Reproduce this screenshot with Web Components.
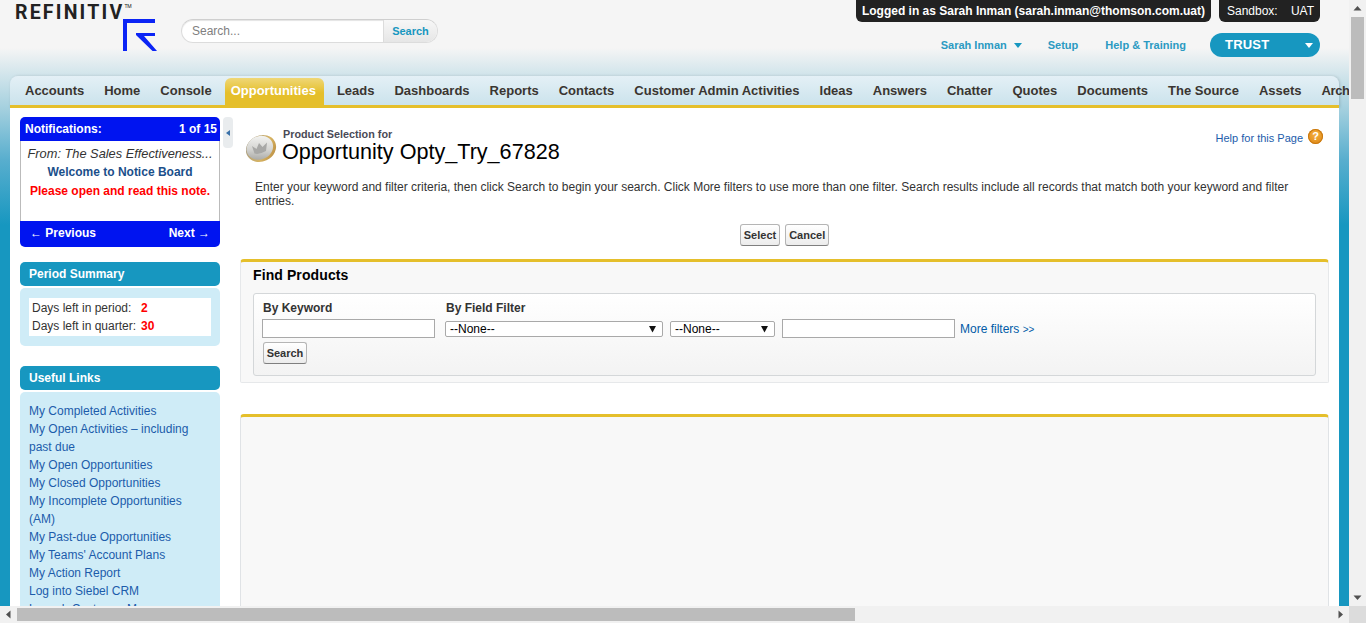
<!DOCTYPE html>
<html lang="en">
<head>
<meta charset="utf-8">
<title>Product Selection</title>
<style>
  html, body { margin: 0; height: 100%; overflow: hidden; }
  body { font: 12px "Liberation Sans", Arial, sans-serif; color: #222; }
</style>
</head>
<body>
<browser-frame>
  <app-header></app-header>
  <nav-tabs>
    <nav-tab>Accounts</nav-tab><nav-tab>Home</nav-tab><nav-tab>Console</nav-tab><nav-tab active>Opportunities</nav-tab><nav-tab>Leads</nav-tab><nav-tab>Dashboards</nav-tab><nav-tab>Reports</nav-tab><nav-tab>Contacts</nav-tab><nav-tab>Customer Admin Activities</nav-tab><nav-tab>Ideas</nav-tab><nav-tab>Answers</nav-tab><nav-tab>Chatter</nav-tab><nav-tab>Quotes</nav-tab><nav-tab>Documents</nav-tab><nav-tab>The Source</nav-tab><nav-tab>Assets</nav-tab><nav-tab style="letter-spacing:-.4px">Arch</nav-tab>
  </nav-tabs>
  <page-body>
    <side-bar slot="side">
      <notice-board></notice-board>
      <side-panel heading="Period Summary"><period-summary></period-summary></side-panel>
      <side-panel heading="Useful Links" style="margin-top:5px">
        <link-list>
          <a>My Completed Activities</a>
          <a>My Open Activities – including past due</a>
          <a>My Open Opportunities</a>
          <a>My Closed Opportunities</a>
          <a>My Incomplete Opportunities (AM)</a>
          <a>My Past-due Opportunities</a>
          <a>My Teams' Account Plans</a>
          <a>My Action Report</a>
          <a>Log into Siebel CRM</a>
          <a>Launch Customer Map</a>
        </link-list>
      </side-panel>
    </side-bar>
    <page-heading></page-heading>
    <find-products></find-products>
    <results-panel></results-panel>
  </page-body>
</browser-frame>

<script>
class BrowserFrame extends HTMLElement {
  constructor() { super(); this.attachShadow({ mode: 'open' }); }
  connectedCallback() {
    const arrow = (pts) => `<svg width="9" height="9" viewBox="0 0 9 9"><polygon points="${pts}" fill="#505050"/></svg>`;
    this.shadowRoot.innerHTML = `
      <style>
        :host { display: grid; grid-template-columns: 1349px 17px; grid-template-rows: 606px 17px; width: 1366px; height: 623px; }
        .view { overflow: hidden; background: linear-gradient(180deg, #f5f5f5 0, #f5f5f5 48px, #a2cfde 110px, #58aece 160px, #1797c0 225px); }
        .vbar { background: #f1f1f1; display: flex; flex-direction: column; align-items: center; }
        .vbar .btn { height: 17px; display: flex; align-items: center; justify-content: center; flex: none; }
        .vbar .thumb { width: 13px; height: 82px; background: #bcbcbc; flex: none; }
        .vbar .rest { flex: 1; }
        .hbar { background: #f1f1f1; display: flex; align-items: center; }
        .hbar .btn { width: 17px; flex: none; display: flex; justify-content: center; }
        .hbar .thumb { width: 838px; height: 13px; background: #bcbcbc; flex: none; }
        .hbar .rest { flex: 1; }
        .corner { background: #dcdcdc; }
      </style>
      <div class="view"><slot></slot></div>
      <div class="vbar">
        <div class="btn">${arrow('4.5,2 8.5,6.5 0.5,6.5')}</div>
        <div class="thumb"></div><div class="rest"></div>
        <div class="btn">${arrow('0.5,2.5 8.5,2.5 4.5,7')}</div>
      </div>
      <div class="hbar">
        <div class="btn">${arrow('2,4.5 6.5,0.5 6.5,8.5')}</div>
        <div class="thumb"></div><div class="rest"></div>
        <div class="btn">${arrow('2.5,0.5 7,4.5 2.5,8.5')}</div>
      </div>
      <div class="corner"></div>
    `;
  }
}

class AppHeader extends HTMLElement {
  constructor() { super(); this.attachShadow({ mode: 'open' }); }
  connectedCallback() {
    this.shadowRoot.innerHTML = `
      <style>
        :host { display: flex; justify-content: space-between; height: 76px; padding: 0 29px 0 15px; font: 12px "Liberation Sans", Arial, sans-serif; }
        .left { display: flex; align-items: flex-start; }
        .logo { width: 142px; padding-top: 3px; }
        .word { font: 700 19.5px/19px Roboto, "Liberation Sans", sans-serif; letter-spacing: 2.2px; color: #222; white-space: nowrap; height: 16px; }
        .word sup { font-size: 5px; letter-spacing: 0; vertical-align: 11px; line-height: 0; font-weight: 400; }
        .logo svg { display: block; margin-left: 108px; }
        .search { display: flex; width: 257px; height: 24px; margin: 19px 0 0 24px; border: 1px solid #dcdcdc; border-top-color: #cfcfcf; border-radius: 12px; box-sizing: border-box; overflow: hidden; background: #fff; box-shadow: inset 0 1px 1px #e4e4e4; }
        .search .q { flex: 1; padding-left: 10px; line-height: 22px; color: #808080; }
        .search .go { width: 53px; text-align: center; line-height: 22px; font-weight: 700; font-size: 11px; color: #1797c0; background: linear-gradient(#f7f7f7, #e6e6e6); border-left: 1px solid #dcdcdc; }
        .right { display: flex; flex-direction: column; align-items: flex-end; }
        .badges { display: flex; gap: 8px; }
        .badge { background: #222; color: #fff; height: 22px; line-height: 22px; border-radius: 0 0 6px 6px; padding: 0 6px; white-space: nowrap; }
        .badge b { font-size: 12px; }
        .sandbox { width: 87px; padding-left: 8px; display: flex; justify-content: space-between; }
        .links { display: flex; align-items: center; margin-top: 11px; height: 24px; font-weight: 700; font-size: 11px; color: #2b9ac2; }
        .links span { white-space: nowrap; }
        .caret { display: inline-block; border: 4px solid transparent; border-top: 5px solid #1797c0; border-bottom: 0; margin: 0 0 1px 7px; }
        .setup { margin-left: 26px; }
        .help { margin-left: 27px; margin-right: 24px; }
        .trust { width: 110px; height: 24px; border-radius: 12px; background: #1797c0; color: #fff; font: 700 13px/22px "Liberation Sans", sans-serif; letter-spacing: .2px; padding: 0 7px 1px 15px; box-sizing: border-box; display: flex; justify-content: space-between; align-items: center; }
        .trust i { border: 4px solid transparent; border-top: 5px solid #fff; border-bottom: 0; margin-top: 1px; }
      </style>
      <div class="left">
        <div class="logo">
          <div class="word">REFINITIV<sup>TM</sup></div>
          <svg width="35" height="33" viewBox="0 0 35 33"><path fill="#0b24f5" d="M0 0H32V4H4V32H0ZM13 14H32V17H21L34 32H29.5L13 16Z"/></svg>
        </div>
        <div class="search"><div class="q">Search...</div><div class="go">Search</div></div>
      </div>
      <div class="right">
        <div class="badges">
          <div class="badge"><b>Logged in as Sarah Inman (sarah.inman@thomson.com.uat)</b></div>
          <div class="badge sandbox"><span>Sandbox:</span><span>UAT</span></div>
        </div>
        <div class="links">
          <span>Sarah Inman<i class="caret"></i></span>
          <span class="setup">Setup</span>
          <span class="help">Help &amp; Training</span>
          <div class="trust"><span>TRUST</span><i></i></div>
        </div>
      </div>
    `;
  }
}

class NavTabs extends HTMLElement {
  constructor() {
    super();
    this.attachShadow({ mode: 'open' }).innerHTML = `
      <style>
        :host { display: flex; height: 29px; margin: 0 10px; padding-left: 5px; padding-top: 0; border-bottom: 3px solid #e5bf2b; border-radius: 8px 8px 0 0; background: linear-gradient(#e4f0f6, #cbe3ec); white-space: nowrap; box-shadow: 1px 0 3px rgba(0,0,0,.15); }
      </style>
      <slot></slot>
    `;
  }
}

class NavTab extends HTMLElement {
  constructor() {
    super();
    this.attachShadow({ mode: 'open' }).innerHTML = `
      <style>
        :host { display: block; flex: none; padding: 0 10px; font: 700 13px/29px "Liberation Sans", Arial, sans-serif; color: #3a3530; }
        :host([active]) { margin: 2px 3px 0 3px; padding: 0 8px 0 6px; line-height: 25px; color: #fff; border-radius: 6px 6px 0 0; background: linear-gradient(#efd777, #e5bf2b 55%); }
      </style>
      <slot></slot>
    `;
  }
}

class PageBody extends HTMLElement {
  constructor() {
    super();
    this.attachShadow({ mode: 'open' }).innerHTML = `
      <style>
        :host { display: flex; margin: 0 10px; padding: 9px 10px 0; background: #fff; height: 600px; box-sizing: border-box; }
        .handle { flex: none; width: 10px; height: 31px; margin: 0 7px 0 3px; border-radius: 4px; background: #e9ecee; display: flex; align-items: center; justify-content: center; }
        .handle i { border: 3px solid transparent; border-right: 4px solid #3a70a8; border-left: 0; }
        .main { flex: 1; min-width: 0; }
      </style>
      <slot name="side"></slot>
      <div class="handle"><i></i></div>
      <div class="main"><slot></slot></div>
    `;
  }
}

class SideBar extends HTMLElement {
  constructor() {
    super();
    this.attachShadow({ mode: 'open' }).innerHTML = `
      <style>:host { display: flex; flex-direction: column; flex: none; width: 200px; gap: 15px; }</style>
      <slot></slot>
    `;
  }
}

class NoticeBoard extends HTMLElement {
  constructor() { super(); this.attachShadow({ mode: 'open' }); }
  connectedCallback() {
    this.shadowRoot.innerHTML = `
      <style>
        :host { display: block; font: 12px "Liberation Sans", Arial, sans-serif; }
        .bar { display: flex; justify-content: space-between; background: #0014f0; color: #fff; font-weight: 700; }
        .top { height: 24px; line-height: 24px; padding: 0 3px 0 5px; border-radius: 5px 5px 0 0; }
        .bottom { height: 26px; line-height: 24px; padding: 0 10px; border-radius: 0 0 5px 5px; }
        .body { height: 80px; box-sizing: border-box; border: solid #bbb; border-width: 0 1px; padding-top: 3px; text-align: center; line-height: 19px; white-space: nowrap; }
        .from { font-style: italic; font-size: 12.8px; color: #333; }
        .title { font-weight: 700; color: #1b4f8a; }
        .note { font-weight: 700; color: #f00; }
      </style>
      <div class="bar top"><span>Notifications:</span><span>1 of 15</span></div>
      <div class="body">
        <div class="from">From: The Sales Effectiveness...</div>
        <div class="title">Welcome to Notice Board</div>
        <div class="note">Please open and read this note.</div>
      </div>
      <div class="bar bottom"><span>← Previous</span><span>Next →</span></div>
    `;
  }
}

class SidePanel extends HTMLElement {
  constructor() { super(); this.attachShadow({ mode: 'open' }); }
  connectedCallback() {
    const heading = this.getAttribute('heading') || '';
    this.shadowRoot.innerHTML = `
      <style>
        :host { display: block; font: 12px "Liberation Sans", Arial, sans-serif; }
        .head { height: 24px; line-height: 24px; padding-left: 9px; background: #1797c0; color: #fff; font-weight: 700; border-radius: 5px; }
        .box { margin-top: 2px; background: #cfecf7; border-radius: 5px; }
      </style>
      <div class="head">${heading}</div>
      <div class="box"><slot></slot></div>
    `;
  }
}

class PeriodSummary extends HTMLElement {
  constructor() {
    super();
    this.attachShadow({ mode: 'open' }).innerHTML = `
      <style>
        :host { display: block; padding: 10px 9px; }
        .inner { background: #fff; padding: 1px 3px; display: grid; grid-template-columns: 109px auto; line-height: 18px; color: #333; }
        b { color: #f00; }
      </style>
      <div class="inner">
        <span>Days left in period:</span><b>2</b>
        <span>Days left in quarter:</span><b>30</b>
      </div>
    `;
  }
}

class LinkList extends HTMLElement {
  constructor() {
    super();
    this.attachShadow({ mode: 'open' }).innerHTML = `
      <style>
        :host { display: block; padding: 10px 30px 10px 9px; line-height: 18px; color: #1c5cab; }
        ::slotted(a) { display: block; }
      </style>
      <slot></slot>
    `;
  }
}

class PageHeading extends HTMLElement {
  constructor() { super(); this.attachShadow({ mode: 'open' }); }
  connectedCallback() {
    this.shadowRoot.innerHTML = `
      <style>
        :host { display: block; position: relative; font: 12px "Liberation Sans", Arial, sans-serif; color: #222; }
        .top { display: flex; padding: 11px 6px 0 6px; height: 46px; box-sizing: border-box; }
        .top svg { flex: none; margin-top: 5px; }
        .names { margin-left: 5px; margin-right: -1px; }
        .name { margin-left: -1px; }
        .type { font: 700 10.8px/12px "Liberation Sans", sans-serif; color: #4a4a56; }
        .name { font: 21.6px/24px "Liberation Sans", sans-serif; color: #000; }
        .help { margin-left: auto; display: flex; gap: 5px; align-items: flex-start; color: #1c5cab; font-size: 11px; line-height: 14px; padding-top: 1px; }
        .help span { margin-top: 2px; }
        .help i { width: 15px; height: 15px; border-radius: 50%; background: radial-gradient(circle at 50% 35%, #f6b243, #d9800d); color: #fff; font: 700 11px/15px "Liberation Sans", sans-serif; text-align: center; box-shadow: inset 0 0 0 1px #c9780f; }
        .intro { margin: 0; padding: 17px 15px 0 15px; line-height: 14px; color: #333; }
        .actions { display: flex; justify-content: center; gap: 5px; padding: 16px 0 13px; }
        .actions sf-button { padding: 0 3px; }
      </style>
      <div class="top">
        <svg width="32" height="32" viewBox="0 0 32 32">
          <defs>
            <linearGradient id="face" x1="0.8" y1="0" x2="0.2" y2="1"><stop offset="0" stop-color="#f7f7f5"/><stop offset=".55" stop-color="#d5d5d2"/><stop offset="1" stop-color="#a3a3a0"/></linearGradient>
            <linearGradient id="rim" x1="0" y1="0" x2="1" y2="1"><stop offset="0" stop-color="#9a968c"/><stop offset=".6" stop-color="#d7b463"/><stop offset="1" stop-color="#b5853a"/></linearGradient>
          </defs>
          <ellipse cx="15" cy="15.5" rx="15.5" ry="13" transform="rotate(-25 15 15.5)" fill="url(#rim)"/>
          <ellipse cx="13.8" cy="14.8" rx="13.6" ry="11.6" transform="rotate(-25 13.8 14.8)" fill="url(#face)"/>
          <path fill="#a8a8a6" d="M6 13L10.5 16 13 10 16.5 14 21 9.5 20 18Q13 22 8.5 20.5Z"/>
        </svg>
        <div class="names">
          <div class="type">Product Selection for</div>
          <div class="name">Opportunity Opty_Try_67828</div>
        </div>
        <div class="help"><span>Help for this Page</span><i>?</i></div>
      </div>
      <p class="intro">Enter your keyword and filter criteria, then click Search to begin your search. Click More filters to use more than one filter. Search results include all records that match both your keyword and filter entries.</p>
      <div class="actions"><sf-button>Select</sf-button><sf-button>Cancel</sf-button></div>
    `;
  }
}

class SfButton extends HTMLElement {
  constructor() {
    super();
    this.attachShadow({ mode: 'open' }).innerHTML = `
      <style>
        :host { display: inline-block; height: 22px; box-sizing: border-box; padding: 0 4px; border: 1px solid #b5b5b5; border-bottom-color: #7f7f7f; border-radius: 3px; background: linear-gradient(#fff, #ececec); font: 700 11px/20px "Liberation Sans", Arial, sans-serif; color: #333; white-space: nowrap; text-align: center; }
      </style>
      <slot></slot>
    `;
  }
}

class FilterSelect extends HTMLElement {
  constructor() {
    super();
    this.attachShadow({ mode: 'open' }).innerHTML = `
      <style>
        :host { display: flex; align-items: center; justify-content: space-between; height: 16px; box-sizing: border-box; padding: 0 6px 0 4px; margin-top: 6px; border: 1px solid #a9a9a9; border-radius: 2px; background: #fff; font: 12px "Liberation Sans", Arial, sans-serif; color: #000; }
        svg { display: block; }
      </style>
      <span><slot></slot></span>
      <svg width="7" height="8" viewBox="0 0 7 8"><polygon points="0,1 7,1 3.5,7.5" fill="#111"/></svg>
    `;
  }
}

class FindProducts extends HTMLElement {
  constructor() { super(); this.attachShadow({ mode: 'open' }); }
  connectedCallback() {
    this.shadowRoot.innerHTML = `
      <style>
        :host { display: block; height: 124px; box-sizing: border-box; background: #f8f8f8; border: 1px solid #e6e8ea; border-top: 3px solid #e5bf2b; border-radius: 4px 4px 2px 2px; padding: 0 12px; font: 12px "Liberation Sans", Arial, sans-serif; }
        h3 { margin: 0; font: 700 14px/27px "Liberation Sans", sans-serif; height: 31px; color: #000; letter-spacing: .1px; }
        .form { height: 83px; box-sizing: border-box; border: 1px solid #d4d7d9; border-radius: 3px; background: linear-gradient(#fff, #f3f3f3); padding: 6px 9px 0 8px; }
        .row { display: flex; align-items: flex-start; }
        label { display: block; font-weight: 700; color: #333; line-height: 14px; margin: 1px 0 4px 1px; }
        .field { height: 19px; box-sizing: border-box; border: 1px solid #a9a9a9; background: #fff; }
        .kw { width: 173px; margin-right: 10px; }
        .col-two { width: 218px; }
        .op { width: 105px; margin: 21px 7px 0 7px; }
        .val { width: 173px; margin-top: 19px; }
        .more { margin: 22px 0 0 5px; color: #015ba7; line-height: 14px; white-space: nowrap; }
        .more small { font-size: 10px; }
        sf-button { margin: 4px 0 0 1px; width: 44px; padding: 0; }
      </style>
      <h3>Find Products</h3>
      <div class="form">
        <div class="row">
          <div class="kw"><label>By Keyword</label><div class="field"></div></div>
          <div class="col-two"><label>By Field Filter</label><filter-select>--None--</filter-select></div>
          <filter-select class="op">--None--</filter-select>
          <div class="field val"></div>
          <div class="more">More filters <small>&gt;&gt;</small></div>
        </div>
        <sf-button>Search</sf-button>
      </div>
    `;
  }
}

class ResultsPanel extends HTMLElement {
  constructor() {
    super();
    this.attachShadow({ mode: 'open' }).innerHTML = `
      <style>
        :host { display: block; height: 400px; margin-top: 31px; background: #f8f8f8; border: 1px solid #e0e3e6; border-top: 3px solid #e5bf2b; border-radius: 4px 4px 0 0; }
      </style>
    `;
  }
}

customElements.define('browser-frame', BrowserFrame);
customElements.define('app-header', AppHeader);
customElements.define('nav-tabs', NavTabs);
customElements.define('nav-tab', NavTab);
customElements.define('page-body', PageBody);
customElements.define('side-bar', SideBar);
customElements.define('notice-board', NoticeBoard);
customElements.define('side-panel', SidePanel);
customElements.define('period-summary', PeriodSummary);
customElements.define('link-list', LinkList);
customElements.define('page-heading', PageHeading);
customElements.define('sf-button', SfButton);
customElements.define('filter-select', FilterSelect);
customElements.define('find-products', FindProducts);
customElements.define('results-panel', ResultsPanel);
</script>
</body>
</html>
